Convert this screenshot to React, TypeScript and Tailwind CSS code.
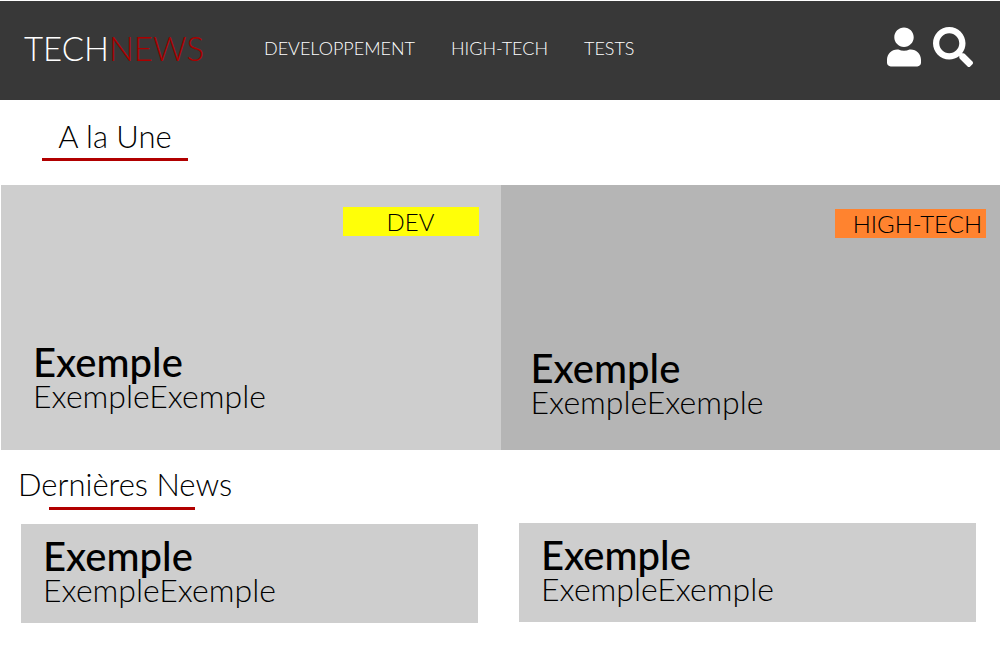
import { FaSearch, FaUser } from "react-icons/fa";

const links = ["DEVELOPPEMENT", "HIGH-TECH", "TESTS"];

function Teaser() {
  return (
    <>
      <h3 className="text-[40px] leading-10 font-medium">Exemple</h3>
      <p className="text-[32px] leading-7">ExempleExemple</p>
    </>
  );
}

export default function App() {
  return (
    <div className="min-h-screen bg-white pt-px font-['Lato',sans-serif] font-light text-black">
      <header className="flex h-[99px] items-center bg-[#383838] pr-[27px] pb-1.5 pl-6 text-white">
        <a href="#" className="w-60 shrink-0 text-[33px] leading-10">
          TECH<span className="text-[#a90000]">NEWS</span>
        </a>
        <nav className="flex flex-1 gap-9 text-lg">
          {links.map((label) => (
            <a key={label} href="#">
              {label}
            </a>
          ))}
        </nav>
        <div className="flex items-center gap-3 pb-0.5">
          <button type="button" aria-label="Compte">
            <FaUser className="h-10 w-[34px]" />
          </button>
          <button type="button" aria-label="Rechercher">
            <FaSearch className="size-10" />
          </button>
        </div>
      </header>

      <main>
        <section>
          <div className="flex h-[85px] flex-col items-start pt-[18px] pl-[42px]">
            <h2 className="w-[146px] border-b-3 border-[#b10000] pb-1 text-center text-[31px] leading-9">
              A la Une
            </h2>
          </div>
          <div className="grid grid-cols-2 pl-px">
            <article className="flex h-[265px] flex-col justify-between bg-[#cecece] px-8 pt-[22px] pb-10">
              <span className="-mr-2.5 w-34 self-end bg-[#ffff08] text-center text-2xl leading-[29px]">
                DEV
              </span>
              <div>
                <Teaser />
              </div>
            </article>
            <article className="flex h-[265px] flex-col justify-between bg-[#b5b5b5] pt-6 pr-3.5 pb-[34px] pl-[30px]">
              <span className="w-[151px] self-end bg-[#ff832f] pr-1 text-right text-2xl leading-[29px]">
                HIGH-TECH
              </span>
              <div>
                <Teaser />
              </div>
            </article>
          </div>
        </section>

        <section>
          <div className="flex h-[73px] flex-col items-start pt-4 pl-[18px]">
            <h2 className="text-[31px] leading-9">Dernières News</h2>
            <div className="mt-[5px] ml-[31px] h-[3px] w-[146px] bg-[#b10000]" />
          </div>
          <div className="grid grid-cols-2 gap-[41px] pr-6 pl-[21px]">
            <article className="mt-px h-[99px] bg-[#cecece] px-[22px] pt-3">
              <Teaser />
            </article>
            <article className="h-[99px] bg-[#cecece] px-[22px] pt-3">
              <Teaser />
            </article>
          </div>
        </section>
      </main>
    </div>
  );
}
